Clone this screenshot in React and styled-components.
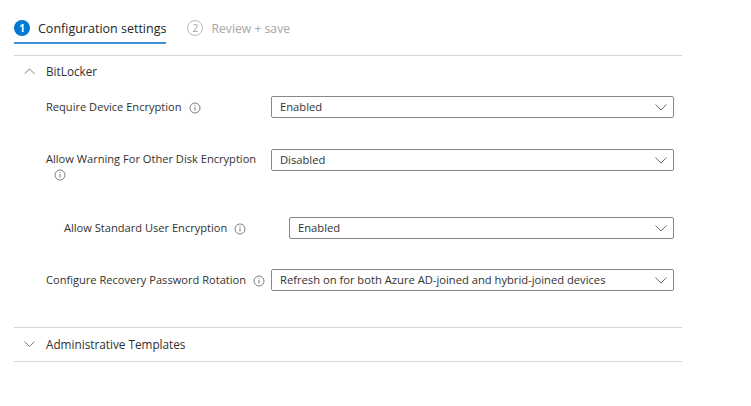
import React from "react";
import styled, { createGlobalStyle } from "styled-components";

const Global = createGlobalStyle`
  html, body { margin: 0; padding: 0; background: #fff; }
  body { font-family: "Open Sans", "Noto Sans", "Liberation Sans", sans-serif; color: #323130; }
`;

const Page = styled.div`
  width: 751px;
  height: 406px;
  box-sizing: border-box;
  padding: 17px 69px 0 14px;
  overflow: hidden;
`;

const Tabs = styled.div`
  display: flex;
  gap: 21px;
  height: 38px;
  border-bottom: 1px solid #d6d6d6;
  align-items: flex-start;
`;

const Tab = styled.div`
  display: flex;
  align-items: center;
  gap: 8px;
  height: 27px;
  padding-bottom: 3px;
  box-sizing: border-box;
  border-bottom: ${(p) => (p.$active ? "2px solid #3f8fd4" : "2px solid transparent")};
  font-size: ${(p) => (p.$active ? 12.5 : 12.2)}px;
  font-weight: ${(p) => (p.$active ? 500 : 400)};
  color: ${(p) => (p.$active ? "#252423" : "#a6a6a6")};
  white-space: nowrap;
`;

const StepBadge = styled.span`
  width: 16px;
  height: 16px;
  box-sizing: border-box;
  border-radius: 50%;
  display: inline-flex;
  align-items: center;
  justify-content: center;
  font-size: 10px;
  font-weight: ${(p) => (p.$active ? 700 : 400)};
  background: ${(p) => (p.$active ? "#0078d4" : "#fff")};
  color: ${(p) => (p.$active ? "#fff" : "#a6a6a6")};
  border: ${(p) => (p.$active ? "none" : "1px solid #bdbdbd")};
`;

const SectionHeader = styled.div`
  display: flex;
  align-items: center;
  height: 33px;
  padding-bottom: 3px;
  box-sizing: border-box;
  font-size: 11.75px;
  color: #323130;
`;

const ChevronBox = styled.span`
  width: 32px;
  padding-left: 10px;
  box-sizing: border-box;
  display: inline-flex;
  align-items: center;
`;

const Fields = styled.div`
  height: 239px;
  box-sizing: border-box;
  padding-top: 7px;
  border-bottom: 1px solid #d6d6d6;
`;

const Row = styled.div`
  display: grid;
  grid-template-columns: 225px 1fr;
  height: ${(p) => p.$h}px;
  padding-left: ${(p) => (p.$nested ? 50 : 32)}px;
  padding-right: 8px;
`;

const Label = styled.div`
  font-size: 11.1px;
  line-height: 18px;
  padding-top: 2px;
  color: #323130;
  white-space: nowrap;
`;

const WrappedLabel = styled(Label)`
  padding-top: 1px;
`;

const InfoIcon = styled.svg`
  width: 12px;
  height: 12px;
  vertical-align: -2.5px;
  margin-left: ${(p) => p.$ml ?? 7}px;
`;

const BlockIcon = styled.div`
  line-height: 12px;
  margin-left: 8px;
`;

const Select = styled.div`
  height: 22px;
  box-sizing: border-box;
  border: 1px solid #8a8886;
  border-radius: 2px;
  display: flex;
  align-items: center;
  justify-content: space-between;
  padding: 0 6px 0 8px;
  font-size: 11.2px;
  color: #323130;
  white-space: nowrap;
`;

const SelectText = styled.span`
  line-height: 18px;
  padding-bottom: 1px;
`;

const ChevronGlyph = styled.svg`
  flex: none;
  display: block;
  margin-top: ${(p) => p.$mt ?? 0}px;
`;

const Bottom = styled(SectionHeader)`
  height: 34px;
  border-bottom: 1px solid #d6d6d6;
  padding-bottom: 1px;
`;

const Info = ({ ml }) => (
  <InfoIcon $ml={ml} viewBox="0 0 12 12" fill="none">
    <circle cx="6" cy="6" r="5" stroke="#6e6e6e" strokeWidth="0.9" />
    <path d="M6 5.2v3.3" stroke="#6e6e6e" strokeWidth="1" />
    <circle cx="6" cy="3.6" r="0.6" fill="#6e6e6e" />
  </InfoIcon>
);

const Chevron = ({ up, mt, w = 12, color = "#605e5c" }) => (
  <ChevronGlyph $mt={mt} width={w} height={(w * 7) / 12} viewBox="0 0 12 7" fill="none">
    <path d={up ? "M0.5 6.5L6 1l5.5 5.5" : "M0.5 0.5L6 6l5.5-5.5"} stroke={color} strokeWidth="0.9" />
  </ChevronGlyph>
);

const Dropdown = ({ value }) => (
  <Select>
    <SelectText>{value}</SelectText>
    <Chevron mt={1} />
  </Select>
);

export default function App() {
  return (
    <Page>
      <Global />
      <Tabs>
        <Tab $active>
          <StepBadge $active>1</StepBadge>
          Configuration settings
        </Tab>
        <Tab>
          <StepBadge>2</StepBadge>
          Review + save
        </Tab>
      </Tabs>
      <SectionHeader>
        <ChevronBox><Chevron up w={11} /></ChevronBox>
        BitLocker
      </SectionHeader>
      <Fields>
        <Row $h={53}>
          <Label>Require Device Encryption<Info /></Label>
          <Dropdown value="Enabled" />
        </Row>
        <Row $h={68}>
          <WrappedLabel>
            Allow Warning For Other Disk Encryption
            <BlockIcon><Info ml={0} /></BlockIcon>
          </WrappedLabel>
          <Dropdown value="Disabled" />
        </Row>
        <Row $h={52} $nested>
          <Label>Allow Standard User Encryption<Info /></Label>
          <Dropdown value="Enabled" />
        </Row>
        <Row $h={50}>
          <Label>Configure Recovery Password Rotation<Info /></Label>
          <Dropdown value="Refresh on for both Azure AD-joined and hybrid-joined devices" />
        </Row>
      </Fields>
      <Bottom>
        <ChevronBox><Chevron w={11} /></ChevronBox>
        Administrative Templates
      </Bottom>
    </Page>
  );
}
